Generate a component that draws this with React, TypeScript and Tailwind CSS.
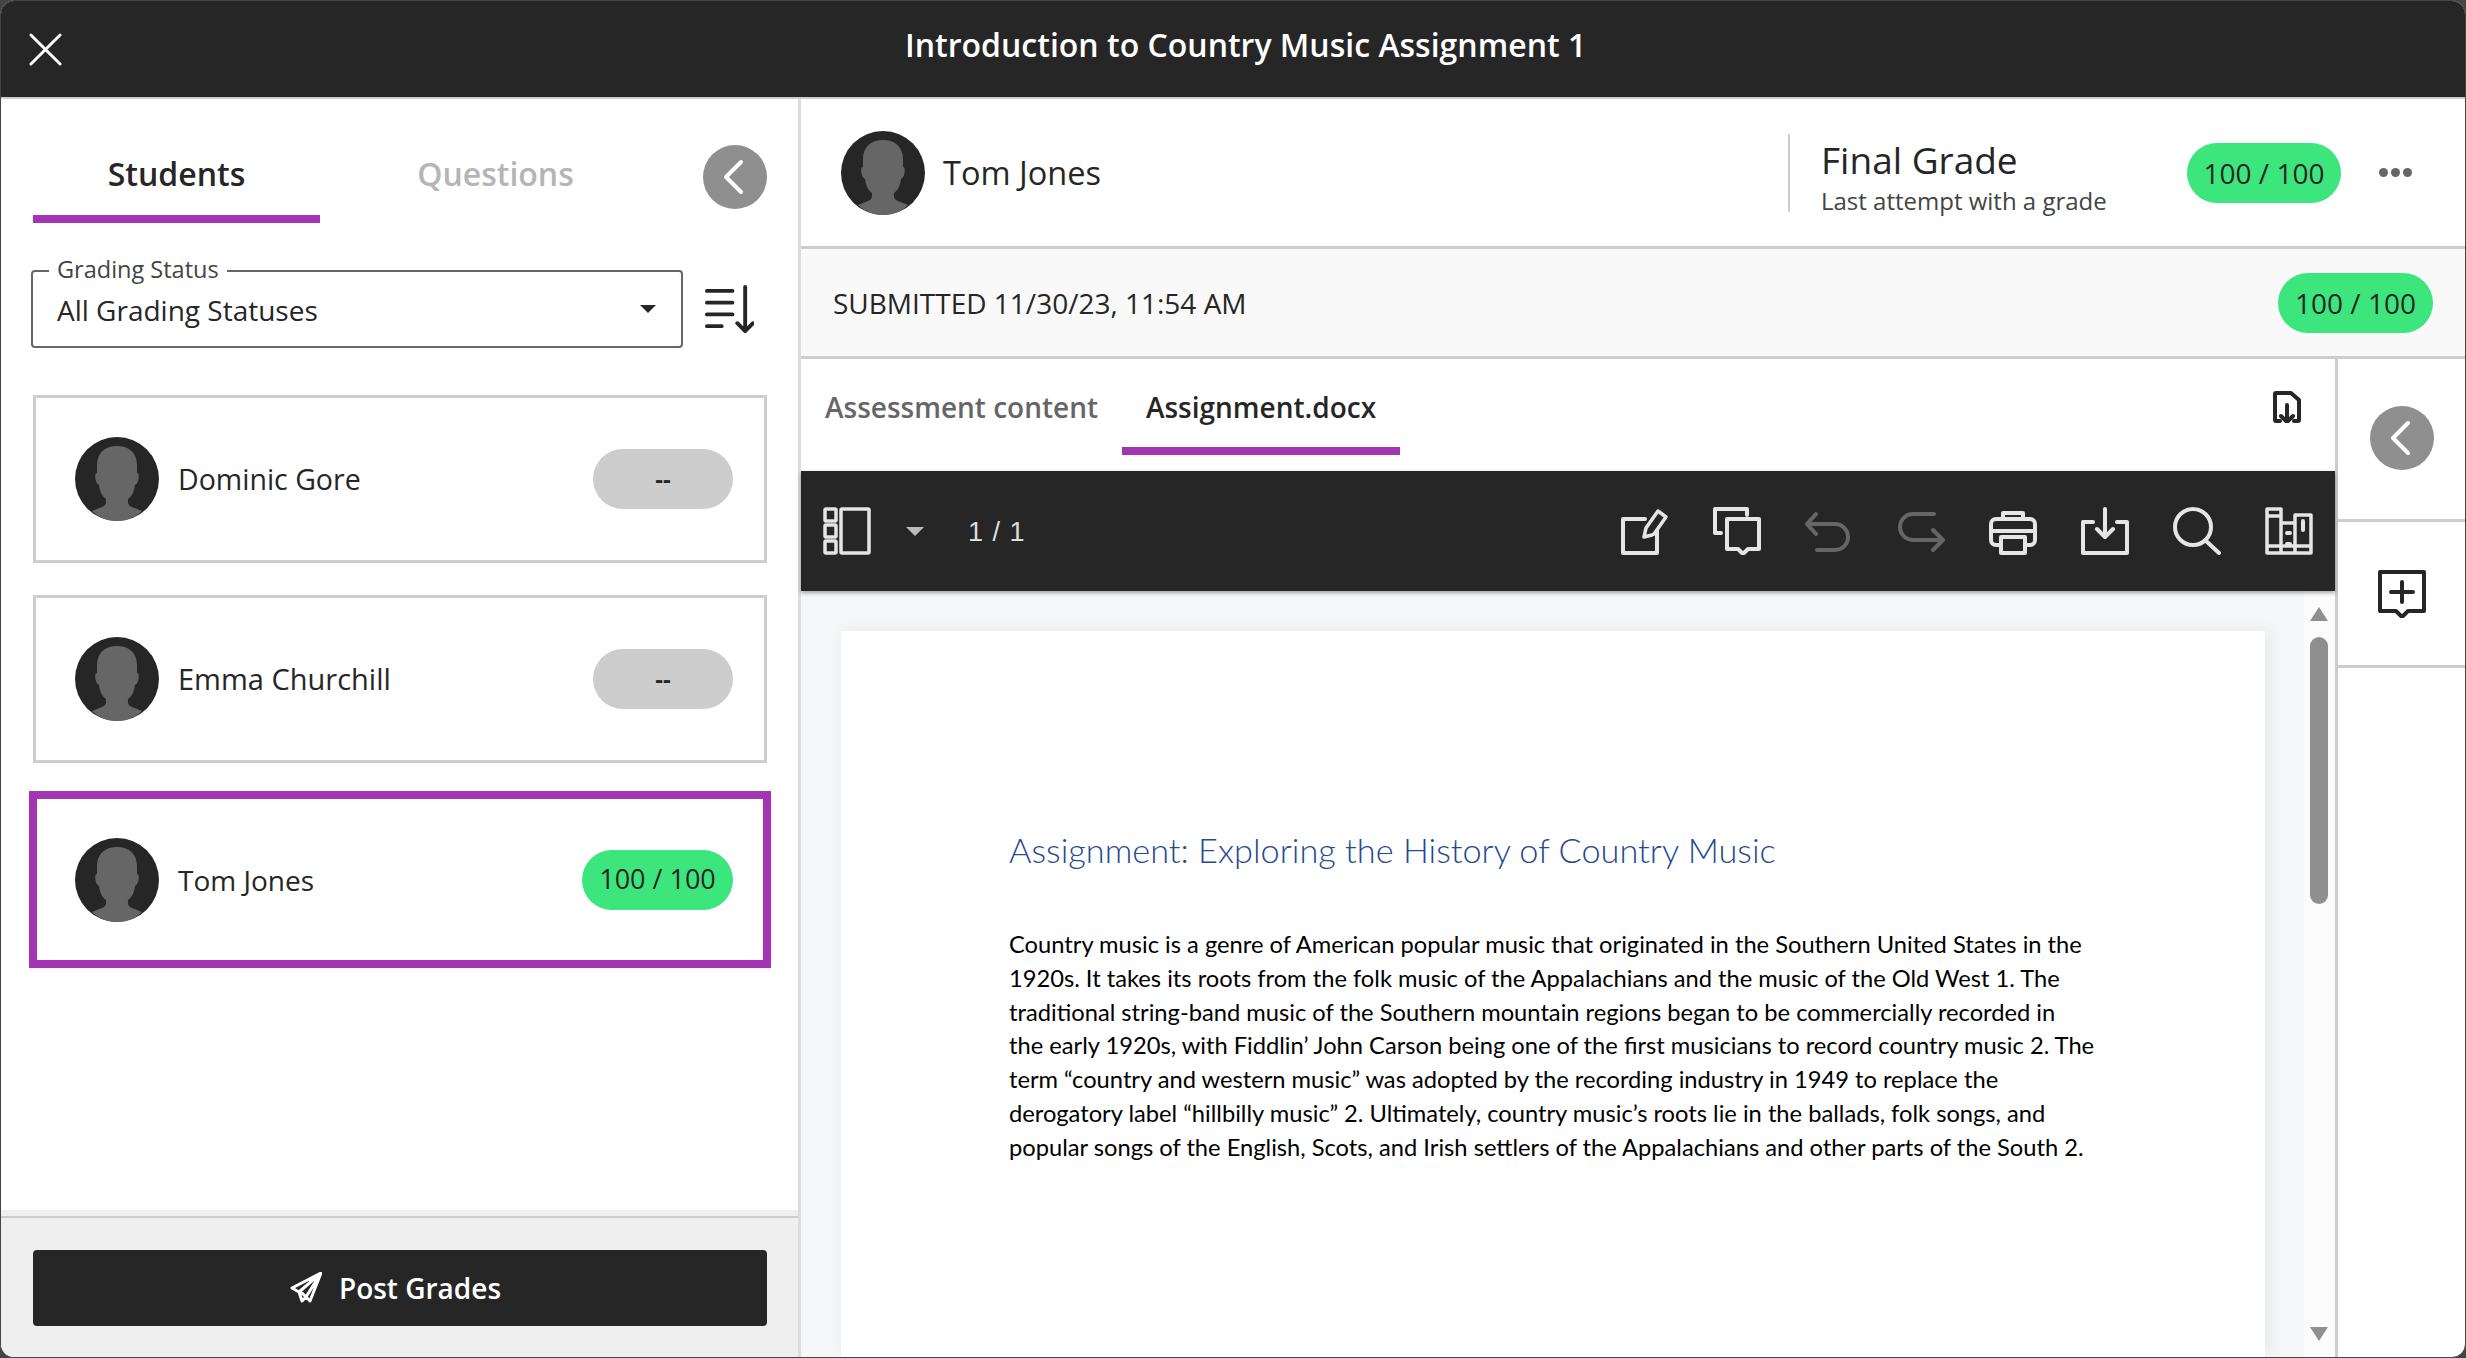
import React from "react";

const OS = "font-['Open_Sans',sans-serif]";

function Avatar() {
  return (
    <svg viewBox="0 0 84 84" className="w-[84px] h-[84px] shrink-0">
      <circle cx="42" cy="42" r="42" fill="#262626" />
      <path
        d="M42 9 C30 9 22 16 22 28 L22 36 C20 36 20 39 20.500 42 C21 45 22 47 24 48 C25 56 28 60 31 62 C31.500 67 30 69 27 70 L17 74 C24 81 33 84 42 84 C51 84 60 81 67 74 L57 70 C54 69 52.500 67 53 62 C56 60 59 56 60 48 C62 47 63 45 63.500 42 C64 39 64 36 62 36 L62 28 C62 16 54 9 42 9 Z"
        fill="#666666"
      />
    </svg>
  );
}

function Back() {
  return (
    <div className="w-16 h-16 rounded-full bg-[#8f8f8f] flex items-center justify-center shrink-0">
      <svg viewBox="0 0 64 64" className="w-16 h-16" fill="none" stroke="#fff" strokeWidth="4" strokeLinecap="round" strokeLinejoin="round">
        <path d="M38 17 L23 32 L38 47" />
      </svg>
    </div>
  );
}

function Pill({ children, w, grey, small }: { children: React.ReactNode; w: string; grey?: boolean; small?: boolean }) {
  return (
    <div className={`${w} h-[60px] rounded-full flex items-center justify-center ${small ? "text-[27px]" : "text-[28px]"} text-[#262626] shrink-0 ${grey ? "bg-[#cdcdcd]" : "bg-[#3de67c]"}`}>
      {children}
    </div>
  );
}

function Card({ name, nameSize, grade, selected }: { name: string; nameSize: string; grade?: boolean; selected?: boolean }) {
  return (
    <div className={`flex items-center justify-between ${selected ? "w-[742px] h-[177px] -ml-1 -mt-1 border-8 border-[#a335b5] pl-[38px] pr-[30px]" : "w-[734px] h-[168px] border-[3px] border-[#cdcdcd] pl-[39px] pr-[31px]"}`}>
      <div className="flex items-center gap-[19px]">
        <Avatar />
        <span className={`${nameSize} font-medium text-[#262626]`}>{name}</span>
      </div>
      {grade ? <Pill w="w-[151px]" small>100 / 100</Pill> : <Pill w="w-[140px]" grey><span className="font-bold text-[24px]">--</span></Pill>}
    </div>
  );
}

function TB({ children, op }: { children: React.ReactNode; op?: string }) {
  return (
    <svg viewBox="0 0 48 48" className="w-12 h-12 shrink-0" fill="none" stroke={op ?? "#e5e5e5"} strokeWidth="4" strokeLinejoin="round" strokeLinecap="round">
      {children}
    </svg>
  );
}

const lines = [
  "Country music is a genre of American popular music that originated in the Southern United States in the",
  "1920s. It takes its roots from the folk music of the Appalachians and the music of the Old West 1. The",
  "traditional string-band music of the Southern mountain regions began to be commercially recorded in",
  "the early 1920s, with Fiddlin’ John Carson being one of the first musicians to record country music 2. The",
  "term “country and western music” was adopted by the recording industry in 1949 to replace the",
  "derogatory label “hillbilly music” 2. Ultimately, country music’s roots lie in the ballads, folk songs, and",
  "popular songs of the English, Scots, and Irish settlers of the Appalachians and other parts of the South 2.",
];

export default function App() {
  return (
    <div className={`w-[2466px] h-[1358px] bg-[#444] overflow-hidden ${OS}`}>
      <div className="w-full h-full rounded-[14px] overflow-hidden flex flex-col bg-white border border-[#444]">
        {/* header */}
        <header className="h-[98px] shrink-0 bg-[#262626] border-b-2 border-[#cdcdcd] flex items-center relative text-white">
          <svg viewBox="0 0 34 34" className="w-[33px] h-[33px] ml-[28px]" fill="none" stroke="#fff" strokeWidth="3" strokeLinecap="round">
            <path d="M2 2 L32 32 M32 2 L2 32" />
          </svg>
          <h1 className="absolute left-[904px] top-[22px] text-[32px] leading-[44px] font-semibold whitespace-nowrap">Introduction to Country Music Assignment 1</h1>
        </header>

        <div className="flex-1 flex min-h-0">
          {/* left */}
          <aside className="w-[800px] shrink-0 flex flex-col border-r-[3px] border-[#dcdcdc]">
            <div className="flex-1 pl-8 flex flex-col">
              <div className="flex items-start h-[124px]">
                <div className="w-[287px] h-[124px] border-b-8 border-[#a335b5] flex items-center justify-center pt-[34px] text-[32px] font-semibold text-[#262626]">Students</div>
                <div className="w-[346px] h-[124px] flex items-center justify-center pt-[26px] pl-[5px] text-[32px] font-semibold text-[#b5b5b5]">Questions</div>
                <div className="mt-[46px] ml-[37px]"><Back /></div>
              </div>
              <div className="mt-[47px] flex items-center">
                <div className="w-[652px] h-[78px] border-2 border-[#666] rounded-[4px] relative -ml-[2px] flex items-center pl-[24px] pr-[25px] justify-between">
                  <span className="absolute left-[16px] -top-[19px] bg-white px-2 text-[23.500px] leading-[32px] text-[#444]">Grading Status</span>
                  <span className="text-[28px] mt-[1px] text-[#262626]">All Grading Statuses</span>
                  <span className="w-0 h-0 border-x-[8px] border-x-transparent border-t-[8px] border-t-[#262626]" />
                </div>
                <svg viewBox="0 0 50 50" className="w-[49px] h-[49px] ml-[22px]" fill="none" stroke="#262626" strokeWidth="4" strokeLinecap="round" strokeLinejoin="round">
                  <path d="M2 6 H28 M2 18 H28 M2 30 H28 M2 42 H17 M41 2 V47 M33 39 L41 47 L49 39" />
                </svg>
              </div>
              <div className="mt-[47px] flex flex-col gap-8">
                <Card name="Dominic Gore" nameSize="text-[28.500px]" />
                <Card name="Emma Churchill" nameSize="text-[29px]" />
                <Card name="Tom Jones" nameSize="text-[28px]" grade selected />
              </div>
            </div>
            <div className="h-[147px] shrink-0 bg-[#efefef] pt-[6px]">
              <div className="border-t-2 border-[#cdcdcd] h-full pl-8 pt-[32px]">
                <button className="w-[734px] h-[76px] bg-[#262626] rounded-[4px] flex items-center justify-center gap-[17px] pr-[9px] text-white text-[28px] font-semibold">
                  <svg viewBox="0 0 32 32" className="w-8 h-8" fill="none" stroke="#fff" strokeWidth="3" strokeLinejoin="round" strokeLinecap="round">
                    <path d="M31 1 L2 16 L9 20 L12 29 L16 25 L20 29 Z M31 1 L9 20 M31 1 L16 25 L12 21" />
                  </svg>
                  Post Grades
                </button>
              </div>
            </div>
          </aside>

          {/* right */}
          <main className="flex-1 min-w-0 flex flex-col">
            <div className="h-[150px] shrink-0 border-b-[3px] border-[#cdcdcd] flex items-center pl-[40px]">
              <Avatar />
              <span className="ml-[18px] mt-[2px] text-[32.500px] text-[#262626]">Tom Jones</span>
              <div className="ml-auto w-[2px] h-[78px] bg-[#cdcdcd]" />
              <div className="ml-[31px] w-[366px] mt-[7px] flex flex-col">
                <span className="text-[37px] leading-[50px] font-medium text-[#262626]">Final Grade</span>
                <span className="text-[24px] leading-[32px] text-[#444]">Last attempt with a grade</span>
              </div>
              <Pill w="w-[154px]">100 / 100</Pill>
              <div className="ml-[38px] mr-[53px] flex gap-[3px]">
                <span className="w-[9px] h-[9px] rounded-full bg-[#666]" />
                <span className="w-[9px] h-[9px] rounded-full bg-[#666]" />
                <span className="w-[9px] h-[9px] rounded-full bg-[#666]" />
              </div>
            </div>
            <div className="h-[110px] shrink-0 bg-[#f9f9f9] border-b-[3px] border-[#cdcdcd] flex items-center justify-between pl-[32px] pr-[32px]">
              <span className="text-[28px] text-[#262626]">SUBMITTED 11/30/23, 11:54 AM</span>
              <Pill w="w-[155px]">100 / 100</Pill>
            </div>

            <div className="flex-1 min-h-0 flex">
              <div className="flex-1 min-w-0 flex flex-col">
                <div className="h-[112px] shrink-0 flex items-start pl-[17px] pr-[34px]">
                  <div className="h-[96px] flex items-center pl-[7px] w-[304px] text-[28px] font-semibold text-[#666]">Assessment content</div>
                  <div className="h-[96px] w-[278px] border-b-8 border-[#a335b5] flex items-center justify-center pt-[8px] text-[28px] font-semibold text-[#262626]">Assignment.docx</div>
                  <svg viewBox="0 0 28 32" className="ml-auto mt-[32px] w-[28px] h-[32px]" fill="none" stroke="#262626" strokeWidth="4" strokeLinecap="round" strokeLinejoin="round">
                    <path d="M7 30 H3 a1 1 0 0 1-1-1 V3 a1 1 0 0 1 1-1 H18 L26 9 V29 a1 1 0 0 1-1 1 H21 M14 14 V30 M8 25 L14 31 L20 25" />
                  </svg>
                </div>
                <div className="h-[120px] shrink-0 bg-[#262626] shadow-[0_2px_4px_rgba(0,0,0,0.35)] relative z-10 flex items-center pl-[22px] pr-[22px] text-[#e5e5e5]">
                  <TB>
                    <g strokeWidth="3.500">
                      <rect x="2" y="2" width="11" height="12" rx="1" />
                      <rect x="2" y="18" width="11" height="12" rx="1" />
                      <rect x="2" y="34" width="11" height="12" rx="1" />
                      <rect x="18" y="2" width="28" height="44" rx="1" />
                    </g>
                  </TB>
                  <span className="ml-[35px] w-0 h-0 border-x-[9px] border-x-transparent border-t-[9px] border-t-[#bbb]" />
                  <span className="ml-[44px] mt-[2px] text-[27px] tracking-[1px] font-['Liberation_Sans',sans-serif] text-[#ddd]">1 / 1</span>
                  <div className="ml-auto flex gap-[44px]">
                    <TB>
                      <path d="M36 24 V46 H2 V12 H24" />
                      <path d="M31 28 L23 30 L25 21 L37 4 L45 10 L33 27 Z" strokeWidth="3.500" />
                    </TB>
                    <TB>
                      <path d="M8 26 H2 V2 H34 V8" />
                      <path d="M14 12 H46 V42 H35 L30 47 L25 42 H14 Z" />
                    </TB>
                    <TB op="#666">
                      <path d="M11 7 L2 17 L11 27 M2 17 H30 a13 13 0 0 1 0 26 H12" />
                    </TB>
                    <TB op="#666">
                      <path d="M37 7 H16 a13 13 0 0 0 0 26 H45 M36 23 L46 33 L36 43" />
                    </TB>
                    <TB>
                      <path d="M14 12 V6 H34 V12 M12 38 H7 a5 5 0 0 1-5-5 V17 a5 5 0 0 1 5-5 H41 a5 5 0 0 1 5 5 V33 a5 5 0 0 1-5 5 H36" />
                      <path d="M3 24 H45" />
                      <rect x="12" y="30" width="24" height="16" />
                    </TB>
                    <TB>
                      <path d="M12 15 H2 V46 H46 V15 H36 M24 2 V30 M16 22 L24 30 L32 22" />
                    </TB>
                    <TB>
                      <circle cx="20" cy="20" r="18" />
                      <path d="M32 33 L46 46" />
                    </TB>
                    <TB>
                      <path d="M2 2 H16 V46 H2 Z M2 9 H16 M2 39 H16 M16 16 H30 V46 H16 M16 39 H46 M30 8 H46 V46 H30 Z M30 39 H46" strokeWidth="3.500" />
                      <path d="M38 14 V23 M22 26 H25 M22 37 H25" />
                    </TB>
                  </div>
                </div>
                <div className="flex-1 min-h-0 overflow-hidden bg-[#f5f6f8] flex">
                  <div className="flex-1 min-w-0 pl-[40px] pt-[40px]">
                    <div className="w-[1424px] h-full bg-white shadow-[4px_0_16px_rgba(0,0,0,0.06)] pl-[168px] pt-[197px] font-['Lato',sans-serif]">
                      <h2 className="text-[34.300px] leading-[44px] font-light text-[#25498f] whitespace-nowrap">Assignment: Exploring the History of Country Music</h2>
                      <div className="mt-[56px] text-[23.700px] leading-[33.800px] text-black whitespace-nowrap">
                        {lines.map((l) => (
                          <div key={l}>{l}</div>
                        ))}
                      </div>
                    </div>
                  </div>
                  <div className="w-[31px] shrink-0 bg-[#fbfbfc] flex flex-col items-center pl-[6px] pr-[7px] pt-[16px] pb-[16px]">
                    <span className="w-0 h-0 border-x-[9px] border-x-transparent border-b-[14px] border-b-[#8f8f8f]" />
                    <div className="w-[18px] h-[267px] rounded-full bg-[#8f8f8f] mt-[16px]" />
                    <span className="mt-auto w-0 h-0 border-x-[9px] border-x-transparent border-t-[14px] border-t-[#8f8f8f]" />
                  </div>
                </div>
              </div>
              <div className="w-[130px] shrink-0 border-l-[3px] border-[#cdcdcd] flex flex-col">
                <div className="h-[163px] border-b-[3px] border-[#cdcdcd] flex items-center justify-center pb-[3px]"><Back /></div>
                <div className="h-[146px] border-b-[3px] border-[#cdcdcd] flex items-center justify-center">
                  <svg viewBox="0 0 48 48" className="w-12 h-12" fill="none" stroke="#262626" strokeWidth="4" strokeLinecap="round" strokeLinejoin="round">
                    <path d="M2 2 H46 V41 H30 L24 47 L18 41 H2 Z M24 12 V32 M13 22 H35" />
                  </svg>
                </div>
              </div>
            </div>
          </main>
        </div>
      </div>
    </div>
  );
}
